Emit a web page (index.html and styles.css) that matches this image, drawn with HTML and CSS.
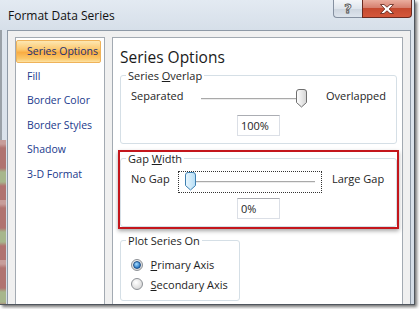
FILE: index.html
```html
<html>

<head>
    <meta charset="utf-8" />
    <title>Format Data Series</title>
    <link rel="stylesheet" href="styles.css">
</head>

<body>
    <div class="window">
        <div class="titlebar">
            <span class="title">Format Data Series</span>
            <div class="caption">
                <span class="cap-btn help">?</span>
                <span class="cap-btn close">
                    <svg width="14" height="10" viewBox="0 0 14 10">
                        <polygon points="0.5,0.5 4,0.5 7,3.2 10,0.5 13.5,0.5 9.2,5 13.5,9.5 10,9.5 7,6.8 4,9.5 0.5,9.5 4.8,5" fill="#fff" stroke="#5a1f15" stroke-width="0.8" />
                    </svg>
                </span>
            </div>
        </div>
        <div class="client">
            <ul class="nav">
                <li class="active">Series Options</li>
                <li>Fill</li>
                <li>Border Color</li>
                <li>Border Styles</li>
                <li>Shadow</li>
                <li>3-D Format</li>
            </ul>
            <div class="pane">
                <h1>Series Options</h1>

                <fieldset class="group">
                    <legend>Series <u>O</u>verlap</legend>
                    <div class="slider-row overlap">
                        <span>Separated</span>
                        <div class="slider">
                            <div class="rail">
                                <svg class="thumb" style="--v: 1" width="11" height="19" viewBox="0 0 11 19">
                                    <defs>
                                        <linearGradient id="tg1" x1="0" y1="0" x2="1" y2="0">
                                            <stop offset="0" stop-color="#ffffff" />
                                            <stop offset="1" stop-color="#d4d4d4" />
                                        </linearGradient>
                                    </defs>
                                    <path d="M0.5 3 Q0.5 0.5 3 0.5 H8 Q10.5 0.5 10.5 3 V13.5 L5.5 18 L0.5 13.5 Z" fill="url(#tg1)" stroke="#6f6f6f" />
                                </svg>
                            </div>
                        </div>
                        <span class="right-label">Overlapped</span>
                    </div>
                    <div class="value">100%</div>
                </fieldset>

                <div class="callout">
                    <fieldset class="group gap">
                        <legend>Gap <u>W</u>idth</legend>
                        <div class="slider-row gapwidth">
                            <span>No Gap</span>
                            <div class="slider focused">
                                <div class="rail">
                                    <svg class="thumb" style="--v: 0" width="11" height="19" viewBox="0 0 11 19">
                                        <defs>
                                            <linearGradient id="tg2" x1="0" y1="0" x2="1" y2="0">
                                                <stop offset="0" stop-color="#eaf7fe" />
                                                <stop offset="1" stop-color="#b6def6" />
                                            </linearGradient>
                                        </defs>
                                        <path d="M0.5 3 Q0.5 0.5 3 0.5 H8 Q10.5 0.5 10.5 3 V13.5 L5.5 18 L0.5 13.5 Z" fill="url(#tg2)" stroke="#3d7fb0" />
                                    </svg>
                                </div>
                            </div>
                            <span class="right-label">Large Gap</span>
                        </div>
                        <div class="value">0%</div>
                    </fieldset>
                </div>

                <fieldset class="group plot">
                    <legend>Plot Series On</legend>
                    <div class="radio-row">
                        <span class="radio checked"></span>
                        <span><u>P</u>rimary Axis</span>
                    </div>
                    <div class="radio-row">
                        <span class="radio"></span>
                        <span><u>S</u>econdary Axis</span>
                    </div>
                </fieldset>
            </div>
        </div>
    </div>
</body>

</html>
```

FILE: styles.css
```css
* {
    box-sizing: border-box;
}

html,
body {
    margin: 0;
    padding: 0;
    background: #fff;
    font-family: "Segoe UI", "Open Sans", sans-serif;
    font-size: 11px;
    color: #1e1e1e;
}

.window {
    width: 415px;
    height: 305px;
    overflow: hidden;
    padding: 0 3px 0 7px;
    border-right: 1px solid #50565e;
    border-bottom: 1px solid #50565e;
    box-shadow: 2px 2px 3px rgba(0, 0, 0, 0.55);
    background:
        repeating-linear-gradient(#c79d9a 0 4px, #b07370 8px 28px, #a7b68c 32px 42px, #b07370 46px 60px) 0 140px / 6px 100% no-repeat,
        linear-gradient(to right, #9aa1a8 0 2px, transparent 2px) 0 30px / 6px 110px no-repeat,
        linear-gradient(#dfe6ee, #d3dce6);
}

/* title bar */

.titlebar {
    height: 30px;
    margin: 0 -3px 0 -7px;
    padding-left: 8px;
    display: flex;
    align-items: center;
    background: linear-gradient(#e3eaf2, #d6dfe9);
}

.title {
    flex: 1;
    font-size: 12px;
    color: #111;
}

.caption {
    align-self: flex-start;
    display: flex;
    margin-right: 2px;
}

.cap-btn {
    height: 18px;
    display: flex;
    align-items: center;
    justify-content: center;
}

.help {
    width: 29px;
    border: 1px solid #8590a0;
    border-top: none;
    border-right: none;
    border-radius: 0 0 0 4px;
    background: linear-gradient(#f4f6f9, #dfe5ec 50%, #cdd5df 51%, #dde4ec);
    font-family: "DejaVu Sans", sans-serif;
    font-weight: bold;
    font-size: 13px;
    color: #f4f4f4;
    -webkit-text-stroke: 0.8px #4e4e4e;
}

.close {
    width: 50px;
    border: 1px solid #6a2a20;
    border-top: none;
    border-radius: 0 0 4px 0;
    background: linear-gradient(#eaae9f, #d6806f 45%, #c54a30 50%, #d4573b);
}

/* client area */

.client {
    height: 290px;
    display: flex;
    gap: 7px;
    padding: 6px 7px 0 7px;
    background: #f0f0f0;
    border: 1px solid #8e99a6;
    border-bottom: none;
}

.nav {
    width: 92px;
    margin: 0;
    padding: 2px 3px 0 0;
    list-style: none;
    background: #fff;
    border: 1px solid #a3aab2;
}

.nav li {
    height: 23px;
    margin-bottom: 1.5px;
    padding-left: 10px;
    font-size: 10.5px;
    line-height: 21px;
    color: #21398c;
    border: 1px solid transparent;
    border-radius: 2px;
    white-space: nowrap;
}

.nav li.active {
    color: #1b2f72;
    border-color: #efb35a;
    background: linear-gradient(#fde7b2, #fcc970 40%, #f9ac42 55%, #fbc96c 85%, #fde2a4);
}

.pane {
    flex: 1;
    padding: 0 5px 0 7px;
    background: #fff;
    border: 1px solid #a3aab2;
}

h1 {
    font-size: 15.5px;
    font-weight: normal;
    line-height: 20px;
    margin: 8.5px 0 1.5px;
    color: #1a1a1a;
}

/* group boxes */

.group {
    margin: 0;
    padding: 0 10px 7px;
    border: 1px solid #d5dfe6;
    border-radius: 3px;
}

.group legend {
    padding: 0 2px;
    margin-left: -5px;
    line-height: 15px;
    color: #1e1e1e;
}

.slider-row {
    display: grid;
    align-items: start;
    margin-top: 5px;
    line-height: 16px;
}

.slider-row.overlap {
    grid-template-columns: 63px 120px auto;
}

.slider-row.gapwidth {
    grid-template-columns: 47px 144px auto;
    margin-top: 6px;
}

.overlap .right-label {
    padding-left: 12px;
}

.gapwidth .right-label {
    padding-left: 10px;
}

.slider {
    height: 22px;
    padding: 0 6px;
    border: 1px dotted transparent;
}

.slider.focused {
    border-color: #333;
}

.rail {
    position: relative;
    height: 20px;
}

.rail::before {
    content: "";
    position: absolute;
    left: 3px;
    right: 0;
    top: 9px;
    border-top: 1px solid #a9a9a9;
    border-bottom: 1px solid #ececec;
}

.overlap .rail::before {
    left: 0;
}

.thumb {
    position: absolute;
    top: 0;
    left: calc(var(--v) * (100% - 11px));
}

.value {
    width: 43px;
    height: 21px;
    margin: 5px auto 0;
    padding-left: 3px;
    line-height: 19px;
    border: 1px solid #dbdfe6;
    border-top-color: #abadb3;
}

.callout {
    margin: 6px -2px 0;
    border: 2px solid #c4161c;
    box-shadow: 0 2px 4px rgba(0, 0, 0, 0.35);
}

.callout .group legend {
    line-height: 13px;
}

.callout .value {
    margin-top: 5px;
}

.plot {
    width: 120px;
    margin-top: 4px;
    padding-bottom: 6px;
}

.radio-row {
    display: flex;
    align-items: center;
    gap: 7.5px;
    height: 19.5px;
}

.radio-row:first-of-type {
    margin-top: 7px;
}

.radio {
    width: 12px;
    height: 12px;
    border-radius: 50%;
    border: 1px solid #8d9196;
    background: radial-gradient(circle at 40% 35%, #ffffff, #dcdcdc 70%, #c8c8c8);
    display: flex;
    align-items: center;
    justify-content: center;
}

.radio.checked::after {
    content: "";
    width: 6px;
    height: 6px;
    border-radius: 50%;
    border: 1px solid #1f4f86;
    background: radial-gradient(circle at 40% 35%, #a6dcff, #2a79c6 70%, #1a4f8e);
}
```
